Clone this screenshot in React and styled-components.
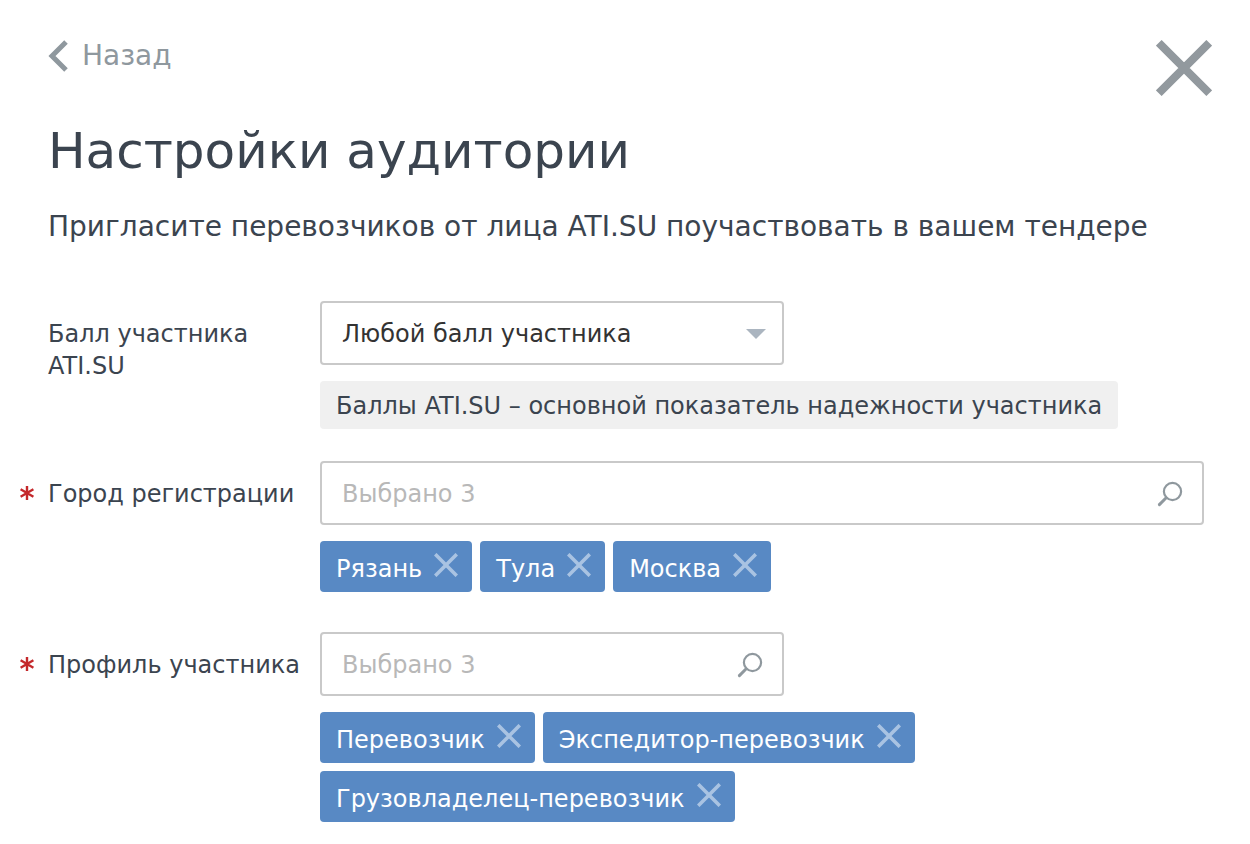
import React, { useState } from 'react';
import styled, { createGlobalStyle } from 'styled-components';

const GlobalStyle = createGlobalStyle`
	* {
		box-sizing: border-box;
	}

	body {
		margin: 0;
		background: #fff;
		color: #3b444f;
		font-family: Verdana, 'DejaVu Sans', sans-serif;
		font-size: 24px;
		line-height: 32px;
	}

	button,
	input,
	select {
		font: inherit;
	}
`;

const Page = styled.main`
	padding: 36px 46px 20px 48px;
`;

const Header = styled.header`
	display: flex;
	justify-content: space-between;
	align-items: flex-start;
	height: 64px;
`;

const PlainButton = styled.button`
	display: flex;
	align-items: center;
	padding: 0;
	border: 0;
	background: none;
	cursor: pointer;
`;

const BackButton = styled(PlainButton)`
	gap: 14px;
	height: 40px;
	color: #8f989e;
	font-size: 28px;
	line-height: 40px;
`;

const CloseButton = styled(PlainButton)`
	margin-top: 4px;
	margin-right: -8px;
`;

const Title = styled.h1`
	margin: 19px 0 0;
	font-size: 50px;
	font-weight: 400;
	line-height: 64px;
`;

const Subtitle = styled.p`
	margin: 24px 0 0;
	font-size: 28px;
	line-height: 40px;
`;

const Form = styled.form`
	display: flex;
	flex-direction: column;
	gap: 32px;
	margin-top: 54px;
`;

const Row = styled.div`
	display: grid;
	grid-template-columns: 256px minmax(0, 1fr);
	column-gap: 16px;
	align-items: start;
`;

const Label = styled.label`
	position: relative;
	padding-top: 17px;
`;

const Required = styled.span`
	position: absolute;
	top: 24px;
	left: -28px;
	display: flex;
`;

const Control = styled.div`
	position: relative;
	width: 100%;
	max-width: ${({ $wide }) => ($wide ? 'none' : '464px')};
`;

const ControlIcon = styled.span`
	position: absolute;
	top: 1px;
	right: ${({ $right }) => $right || 21}px;
	display: flex;
	align-items: center;
	height: 64px;
	pointer-events: none;
`;

const fieldStyles = `
	display: block;
	width: 100%;
	height: 64px;
	padding: 2px 60px 0 20px;
	border: 2px solid #c9c9c9;
	border-radius: 4px;
	background: #fff;
	outline: none;
	appearance: none;
`;

const Select = styled.select`
	${fieldStyles}
	color: #333;
`;

const Input = styled.input`
	${fieldStyles}
	color: #333;

	&::placeholder {
		color: #b8b8b8;
		opacity: 1;
	}
`;

const Hint = styled.div`
	width: fit-content;
	margin-top: 16px;
	padding: 9px 16px 7px;
	border-radius: 4px;
	background: #f0f0f0;
`;

const Tags = styled.ul`
	display: flex;
	flex-wrap: wrap;
	gap: 8px;
	margin: 16px 0 8px;
	padding: 0;
	list-style: none;
`;

const Tag = styled.li`
	display: flex;
	align-items: flex-start;
	gap: 12px;
	height: 51px;
	padding: 12px 14px 0 16px;
	border-radius: 4px;
	background: #5889c4;
	color: #fff;
`;

function SearchIcon() {
	return (
		<svg width="26" height="26" viewBox="0 0 26 26" fill="none" stroke="#8f989e">
			<circle cx="15.5" cy="10.5" r="8.6" strokeWidth="2.2" />
			<path d="M9.2 16.8L2.4 23.6" strokeWidth="3" strokeLinecap="round" />
		</svg>
	);
}

function TagField({ id, label, wide, initial }) {
	const [tags, setTags] = useState(initial);
	return (
		<Row>
			<Label htmlFor={id}>
				<Required aria-hidden="true">
					<svg width="14" height="16" viewBox="0 0 14 16" stroke="#c4282b" strokeWidth="2.4">
						<path d="M7 1V15M0.6 4.2L13.4 11.8M0.6 11.8L13.4 4.2" />
					</svg>
				</Required>
				{label}
			</Label>
			<div>
				<Control $wide={wide}>
					<Input
						id={id}
						type="text"
						placeholder={`Выбрано ${tags.length}`}
						required
					/>
					<ControlIcon>
						<SearchIcon />
					</ControlIcon>
				</Control>
				<Tags>
					{tags.map(tag => (
						<Tag key={tag}>
							{tag}
							<PlainButton
								type="button"
								aria-label={`Удалить ${tag}`}
								onClick={() => setTags(tags.filter(t => t !== tag))}
							>
								<svg width="24" height="24" viewBox="0 0 24 24" stroke="#a9c3e2" strokeWidth="3.6">
									<path d="M1.2 1.2L22.8 22.8M22.8 1.2L1.2 22.8" />
								</svg>
							</PlainButton>
						</Tag>
					))}
				</Tags>
			</div>
		</Row>
	);
}

function App() {
	return (
		<>
			<GlobalStyle />
			<Page>
				<Header>
					<BackButton type="button">
						<svg width="20" height="32" viewBox="0 0 20 32" fill="none" stroke="#8f989e" strokeWidth="5">
							<path d="M18 2L4 16L18 30" />
						</svg>
						Назад
					</BackButton>
					<CloseButton type="button" aria-label="Закрыть">
						<svg width="56" height="56" viewBox="0 0 56 56" stroke="#92999e" strokeWidth="8">
							<path d="M2.8 2.8L53.2 53.2M53.2 2.8L2.8 53.2" />
						</svg>
					</CloseButton>
				</Header>
				<Title>Настройки аудитории</Title>
				<Subtitle>
					Пригласите перевозчиков от лица ATI.SU поучаствовать в вашем тендере
				</Subtitle>
				<Form>
					<Row>
						<Label htmlFor="score">
							Балл участника ATI.SU
						</Label>
						<div>
							<Control>
								<Select id="score" defaultValue="any">
									<option value="any">Любой балл участника</option>
								</Select>
								<ControlIcon $right={18}>
									<svg width="20" height="10" viewBox="0 0 20 10" fill="#abb5c0">
										<path d="M0 0H20L10 10Z" />
									</svg>
								</ControlIcon>
							</Control>
							<Hint>Баллы ATI.SU – основной показатель надежности участника</Hint>
						</div>
					</Row>
					<TagField
						id="city"
						label="Город регистрации"
						wide
						initial={['Рязань', 'Тула', 'Москва']}
					/>
					<TagField
						id="profile"
						label="Профиль участника"
						initial={[
							'Перевозчик',
							'Экспедитор-перевозчик',
							'Грузовладелец-перевозчик',
						]}
					/>
				</Form>
			</Page>
		</>
	);
}

export default App;
